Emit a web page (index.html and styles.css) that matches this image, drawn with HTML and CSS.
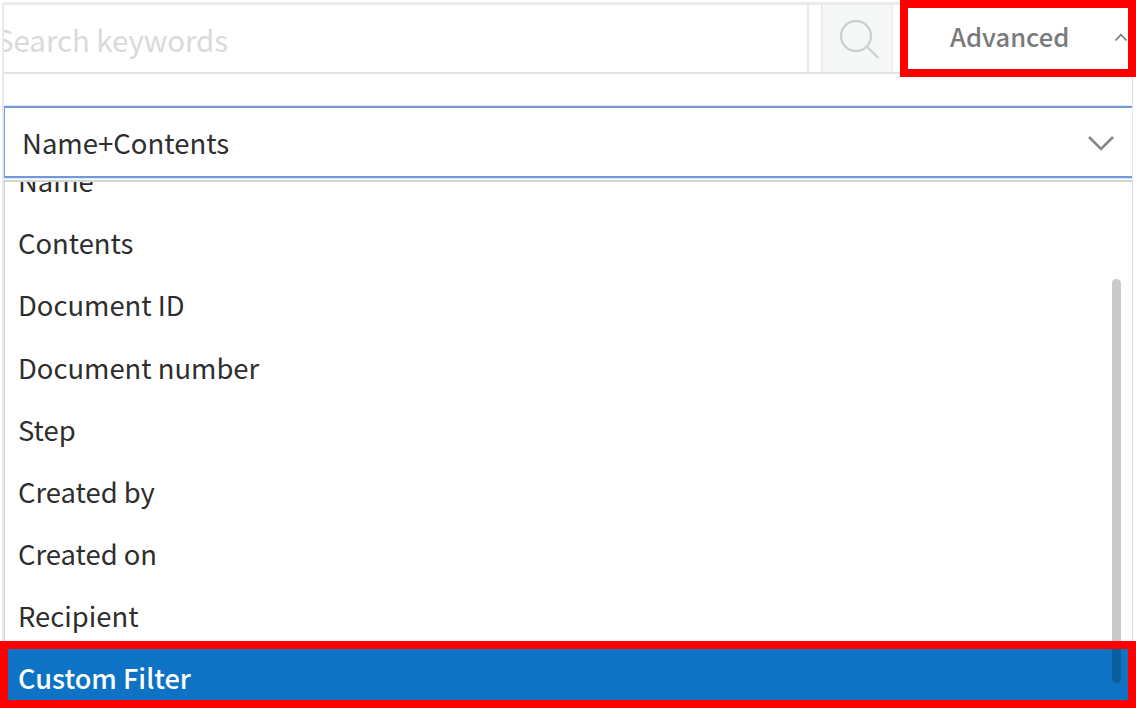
FILE: index.html
```html
<!DOCTYPE html>
<html lang="en">
<head>
<meta charset="utf-8">
<title>Search</title>
<link rel="stylesheet" href="styles.css">
</head>
<body>
<main class="panel">
  <header class="toolbar">
    <div class="search"><span class="placeholder">Search keywords</span></div>
    <button class="search-btn" aria-label="Search">
      <svg width="42" height="42" viewBox="0 0 42 42" fill="none" stroke="#cfd1d1" stroke-width="2.4"><circle cx="18" cy="18" r="15"/><path d="M28.7 28.5 40.5 40"/></svg>
    </button>
    <button class="advanced"><span class="advanced-label">Advanced</span>
      <svg width="14" height="9" viewBox="0 0 14 9" fill="none" stroke="#707070" stroke-width="1.5"><path d="M1.5 7.5 7 1.7 12.5 7.5"/></svg>
    </button>
  </header>
  <div class="select"><span>Name+Contents</span>
    <svg width="28" height="18" viewBox="0 0 28 18" fill="none" stroke="#858585" stroke-width="2.6"><path d="M2 2 14 14 26 2"/></svg>
  </div>
  <ul class="options">
    <li>Name</li>
    <li>Contents</li>
    <li>Document ID</li>
    <li>Document number</li>
    <li>Step</li>
    <li>Created by</li>
    <li>Created on</li>
    <li>Recipient</li>
    <li class="selected">Custom Filter</li>
  </ul>
</main>
<div class="highlight highlight-advanced"></div>
<div class="highlight highlight-filter"></div>
<div class="scroll-thumb"></div>
</body>
</html>
```
FILE: styles.css
```css
* { box-sizing: border-box; }
body {
  margin: 0;
  width: 1136px;
  height: 708px;
  overflow: hidden;
  position: relative;
  background: #fff;
  color: #2e2e2e;
  font-family: "Noto Sans CJK KR", "Noto Sans CJK SC", sans-serif;
  font-size: 27.4px;
}
button { border: 0; padding: 0; background: none; font: inherit; }
svg { display: block; flex: none; }
.panel {
  display: flex;
  flex-direction: column;
  height: 708px;
  margin: 2px 3px 0 2px;
  border-left: 2px solid #e9e9e9;
  border-right: 1px solid #dcdcdc;
  border-top: 3px solid #ebebeb;
  border-top-left-radius: 3px;
}
.toolbar {
  display: flex;
  flex: none;
  height: 69px;
  border-bottom: 2px solid #e4e4e4;
}
.search {
  width: 805px;
  border-right: 2px solid #e9e9e9;
  overflow: hidden;
  font-size: 29.4px;
  line-height: 68px;
}
.placeholder { margin-left: -8px; color: #dadada; white-space: nowrap; }
.search-btn {
  display: flex;
  align-items: flex-start;
  width: 72px;
  margin-left: 12px;
  padding: 13px 0 0 15px;
  background: #f6f8f8;
  border: 1px solid #eaebeb;
  border-width: 0 1px 0 2px;
}
.advanced {
  display: flex;
  flex: 1;
  padding: 0 4px 0 57px;
  justify-content: space-between;
  align-items: flex-start;
  color: #7a7a7a;
  font-size: 25.6px;
  font-weight: 500;
}
.advanced-label { line-height: 62px; }
.advanced svg { margin-top: 28px; }
.select {
  display: flex;
  flex: none;
  justify-content: space-between;
  height: 72px;
  margin-top: 32px;
  padding: 0 17px 0 17px;
  border: 2px solid #7099d6;
  border-width: 2px 0 2px 1px;
  box-shadow: 0 0 0 1px #e1e9f6;
  font-size: 27.5px;
  line-height: 69px;
}
.select svg { margin-top: 27px; }
.options {
  flex: 1;
  margin: 2px 0 0;
  padding: 0;
  list-style: none;
  overflow: hidden;
  border-top: 2px solid #d4d5d7;
  border-left: 1px solid #cfcfcf;
}
.options li {
  height: 62.2px;
  padding-left: 13px;
  line-height: 62.2px;
}
.options li:first-child { margin-top: -32.9px; }
.options .selected { background: #0e73c4; color: #fff; font-size: 27.1px; font-weight: 500; }
.highlight { position: absolute; border: 8px solid #f00; }
.highlight-advanced { left: 900px; top: 0; width: 236px; height: 77px; }
.highlight-filter { left: 0; top: 641px; width: 1136px; height: 67px; }
.scroll-thumb {
  position: absolute;
  left: 1112px;
  top: 279px;
  width: 9px;
  height: 404px;
  border-radius: 5px;
  background: linear-gradient(#c9c9c9 362px, transparent 362px, transparent 370px, #0b5c9d 370px);
}
```
